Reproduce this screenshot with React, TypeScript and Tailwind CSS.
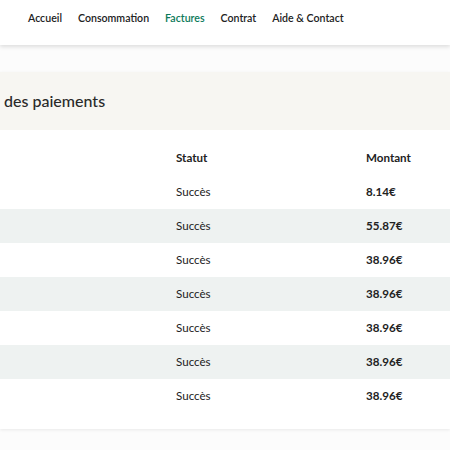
import React from 'react';

const NAV = ['Accueil', 'Consommation', 'Factures', 'Contrat', 'Aide & Contact'];

const PAYMENTS = [
  { statut: 'Succès', montant: '8.14€' },
  { statut: 'Succès', montant: '55.87€' },
  { statut: 'Succès', montant: '38.96€' },
  { statut: 'Succès', montant: '38.96€' },
  { statut: 'Succès', montant: '38.96€' },
  { statut: 'Succès', montant: '38.96€' },
  { statut: 'Succès', montant: '38.96€' },
];

const App = () => {
  return (
    <div className="min-h-[450px] w-[450px] overflow-hidden bg-[#fcfcfc] text-[#222] [font-family:Lato,'Noto_Sans',sans-serif]">
      {/* Top navigation */}
      <header className="relative z-10 h-[45px] bg-white shadow-[0_2px_4px_rgba(0,0,0,0.12)]">
        <nav className="flex h-full items-center gap-[16px] pb-[8px] pl-[28px] text-[10.6px] font-semibold">
          {NAV.map((item) => (
            <a
              key={item}
              className={item === 'Factures' ? 'text-[#0b7a5a]' : 'text-[#222]'}
            >
              {item}
            </a>
          ))}
        </nav>
      </header>

      <div className="pt-[27px]">
        <section className="bg-white shadow-[0_1px_3px_rgba(0,0,0,0.08)]">
          {/* Card title */}
          <div className="flex h-[58px] items-center bg-[#f7f6f2]">
            <h2 className="ml-[-74px] whitespace-nowrap text-[16px] font-medium text-[#2a2a2a]">
              Historique des paiements
            </h2>
          </div>

          {/* Payments table */}
          <div className="pt-[11px] pb-[16px] text-[11.6px]">
            <div className="flex h-[34px] items-center font-bold">
              <span className="w-[176px]" />
              <span className="w-[190px]">Statut</span>
              <span>Montant</span>
            </div>
            {PAYMENTS.map((p, i) => (
              <div
                key={i}
                className={`flex h-[34px] items-center ${i % 2 === 1 ? 'bg-[#eef2f1]' : 'bg-white'}`}
              >
                <span className="w-[176px]" />
                <span className="w-[190px]">{p.statut}</span>
                <span className="font-bold">{p.montant}</span>
              </div>
            ))}
          </div>
        </section>
      </div>
    </div>
  );
};

export default App;
